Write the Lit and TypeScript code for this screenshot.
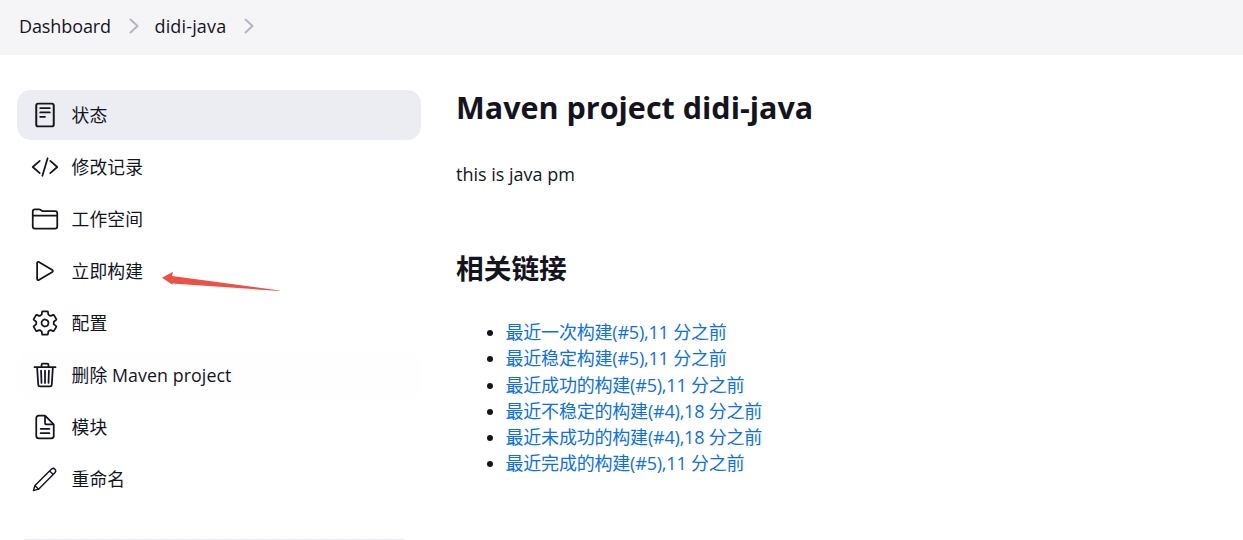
import { LitElement, html, css, svg } from "lit";
import { customElement } from "lit/decorators.js";

const S = (c: unknown) => html`<svg class="ico" viewBox="0 0 512 512" fill="none" stroke="#14141f" stroke-width="32" stroke-linecap="round" stroke-linejoin="round">${c}</svg>`;

const icons = {
  status: S(svg`<rect x="96" y="48" width="320" height="416" rx="36" stroke-width="36"/><path d="M168 128h176M168 208h176M168 288h88"/>`),
  code: S(svg`<path d="M160 368L32 256l128-112M352 368l128-112-128-112M304 96l-96 320"/>`),
  folder: S(svg`<path d="M440 432H72a40 40 0 01-40-40V120a40 40 0 0140-40h75.89a40 40 0 0122.19 6.72l27.84 18.56a40 40 0 0022.19 6.72H440a40 40 0 0140 40v240a40 40 0 01-40 40zM32 192h448"/>`),
  play: S(svg`<path d="M112 111v290c0 17.44 17 28.52 31 20.16l247.9-148.37c12.12-7.25 12.12-26.33 0-33.58L143 90.84c-14-8.36-31 2.72-31 20.16z"/>`),
  gear: S(svg`<path d="M262.29 192.31a64 64 0 1057.4 57.4 64.13 64.13 0 00-57.4-57.4zM416.39 256a154.34 154.34 0 01-1.53 20.79l45.21 35.46a10.81 10.81 0 012.45 13.75l-42.77 74a10.81 10.81 0 01-13.14 4.59l-44.9-18.08a16.11 16.11 0 00-15.17 1.75A164.48 164.48 0 01325 400.8a15.94 15.94 0 00-8.82 12.14l-6.73 47.89a11.08 11.08 0 01-10.68 9.17h-85.54a11.11 11.11 0 01-10.69-8.87l-6.72-47.82a16.07 16.07 0 00-9-12.22 155.3 155.3 0 01-21.46-12.57 16 16 0 00-15.11-1.71l-44.89 18.07a10.81 10.81 0 01-13.14-4.58l-42.77-74a10.8 10.8 0 012.45-13.75l38.21-30a16.05 16.05 0 006-14.08c-.36-4.17-.58-8.33-.58-12.5s.21-8.27.58-12.35a16 16 0 00-6.07-13.94l-38.19-30A10.81 10.81 0 0149.48 186l42.77-74a10.81 10.81 0 0113.14-4.59l44.9 18.08a16.11 16.11 0 0015.17-1.75A164.48 164.48 0 01187 111.2a15.94 15.94 0 008.82-12.14l6.73-47.89A11.08 11.08 0 01213.23 42h85.54a11.11 11.11 0 0110.69 8.87l6.72 47.82a16.07 16.07 0 009 12.22 155.3 155.3 0 0121.46 12.57 16 16 0 0015.11 1.71l44.89-18.07a10.81 10.81 0 0113.14 4.58l42.77 74a10.8 10.8 0 01-2.45 13.75l-38.21 30a16.05 16.05 0 00-6.05 14.08c.33 4.14.55 8.3.55 12.47z"/>`),
  trash: S(svg`<path d="M112 112l20 320c.95 18.49 14.4 32 32 32h184c17.67 0 30.87-13.51 32-32l20-320M64 112h384M192 112V72a24 24 0 0124-24h80a24 24 0 0124 24v40M256 176v224M184 176l8 224M328 176l-8 224"/>`),
  doc: S(svg`<path d="M416 221.25V416a48 48 0 01-48 48H144a48 48 0 01-48-48V96a48 48 0 0148-48h98.75a32 32 0 0122.62 9.37l141.26 141.26a32 32 0 019.37 22.62z"/><path d="M256 56v120a32 32 0 0032 32h120M176 288h160M176 368h160"/>`),
  pencil: S(svg`<path stroke-width="26" d="M44 468l28-92L362 86c24-24 58-28 76-10s14 52-10 76L138 442z M72 376l66 66 M340 108l66 66"/>`),
};

const tasks: [unknown, string][] = [
  [icons.status, "状态"],
  [icons.code, "修改记录"],
  [icons.folder, "工作空间"],
  [icons.play, "立即构建"],
  [icons.gear, "配置"],
  [icons.trash, "删除 Maven project"],
  [icons.doc, "模块"],
  [icons.pencil, "重命名"],
];

const links = [
  "最近一次构建(#5),11 分之前",
  "最近稳定构建(#5),11 分之前",
  "最近成功的构建(#5),11 分之前",
  "最近不稳定的构建(#4),18 分之前",
  "最近未成功的构建(#4),18 分之前",
  "最近完成的构建(#5),11 分之前",
];

const chev = html`<svg class="chev" viewBox="0 0 10 16" fill="none" stroke="#b4b4c2" stroke-width="2" stroke-linecap="round" stroke-linejoin="round"><path d="M1.5 1.5L8.5 8l-7 6.5"/></svg>`;

@customElement("app-root")
export class AppRoot extends LitElement {
  static styles = css`
    :host {
      display: block;
      position: relative;
      height: 540px;
      overflow: hidden;
      background: #fff;
      color: #14141f;
      font-family: "Open Sans", "Noto Sans CJK SC", sans-serif;
      font-size: 18px;
    }
    .crumbs {
      height: 55px;
      box-sizing: border-box;
      background: #f5f5f8;
      display: flex;
      align-items: center;
      padding: 0 0 3px 19px;
      font-size: 18px;
    }
    .crumbs span { letter-spacing: -0.1px; }
    .crumbs span.proj { letter-spacing: 0.15px; }
    .chev { width: 10px; height: 16px; margin: 0 16px 0 17.5px; }
    .main { display: flex; padding: 35px 0 0 17px; }
    aside { width: 404px; flex: none; display: flex; flex-direction: column; gap: 2px; }
    .task {
      height: 50px;
      border-radius: 14px;
      display: flex;
      align-items: center;
      padding-left: 14px;
      font-size: 17.8px;
      letter-spacing: 0.08px;
    }
    .task span { position: relative; top: -1px; left: -0.4px; }
    .task.on { background: #ecedf2; }
    .task.del { background: #fefefe; }
    .ico { width: 28px; height: 28px; flex: none; margin-right: 13px; }
    .rule { height: 1px; background: #eaeaf0; margin: 33px 16px 0 7px; }
    main { margin-left: 35px; }
    h1 { margin: 0; font-size: 30.5px; font-weight: 700; line-height: 34px; }
    p { margin: 37px 0 0; font-size: 18px; line-height: 26px; }
    h2 { margin: 63.4px 0 0; font-size: 27.7px; font-weight: 700; line-height: 36px; }
    ul { margin: 32.8px 0 0; padding: 0 0 0 49.5px; }
    li { line-height: 26.2px; font-size: 18px; letter-spacing: -0.2px; }
    li::marker { color: #14141f; }
    a { color: #0a6ff0; text-decoration: none; }
    .arrow { position: absolute; left: 160px; top: 270px; width: 122px; height: 24px; }
  `;

  render() {
    return html`
      <nav class="crumbs"><span>Dashboard</span>${chev}<span class="proj">didi-java</span>${chev}</nav>
      <div class="main">
        <aside>
          ${tasks.map(([i, t], n) => html`<div class="task ${n === 0 ? "on" : n === 5 ? "del" : ""}">${i}<span>${t}</span></div>`)}
          <div class="rule"></div>
        </aside>
        <main>
          <h1>Maven project didi-java</h1>
          <p>this is java pm</p>
          <h2>相关链接</h2>
          <ul>${links.map((l) => html`<li><a href="#">${l}</a></li>`)}</ul>
        </main>
      </div>
      <svg class="arrow" viewBox="0 0 122 24"><path fill="#ee5045" d="M2 7.7 L13 1.7 L12 6 L119.5 20.5 L119.5 21 L12 13.5 L13 15 Z"/></svg>
    `;
  }
}
